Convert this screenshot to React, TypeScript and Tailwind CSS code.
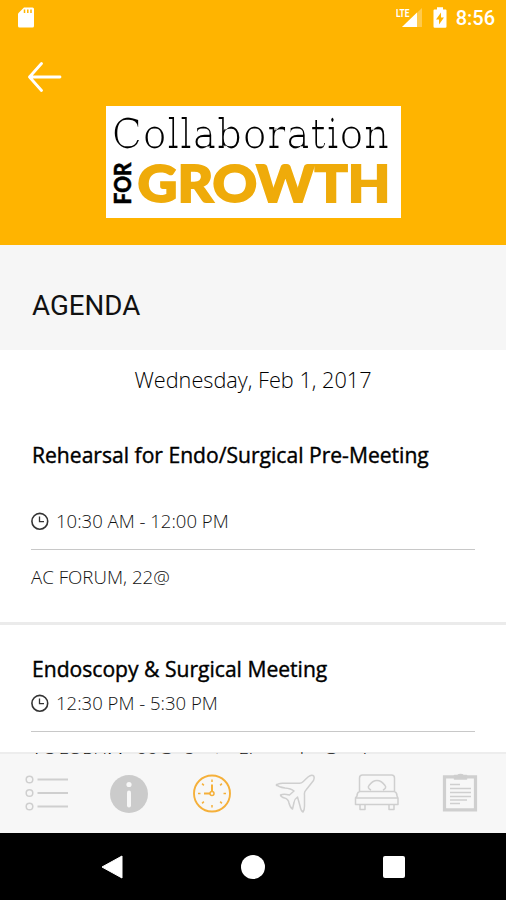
import type { ReactNode } from 'react';

interface Session {
  title: string;
  time: string;
  place: string;
}

const sessions: Session[] = [
  { title: 'Rehearsal for Endo/Surgical Pre-Meeting', time: '10:30 AM - 12:00 PM', place: 'AC FORUM, 22@' },
  { title: 'Endoscopy & Surgical Meeting', time: '12:30 PM - 5:30 PM', place: 'AC FORUM , 22@, Sants, Eixample, Gracia' },
];

function StatusBar() {
  return (
    <div className="flex h-9 items-center justify-between pl-[17px] pr-[11px]">
      <svg width="18" height="22" viewBox="0 0 18 22">
        <path d="M7 .5h8.500a1.500 1.500 0 0 1 1.500 1.500v17a1.500 1.500 0 0 1-1.500 1.500h-13a1.500 1.500 0 0 1-1.500-1.500V6.500z" fill="#fff" />
        <path d="M7.500 2.500v3.500M10.800 2.500v3.500M14 2.500v3.500" stroke="#ffb400" strokeWidth="1.500" />
      </svg>
      <div className="flex items-center">
        <svg width="28" height="22" viewBox="0 0 28 22">
          <text x="0" y="9.500" textLength="13.500" lengthAdjust="spacingAndGlyphs" className="font-['Roboto',sans-serif] text-[11.500px] font-bold" fill="#fff">LTE</text>
          <path d="M6 20L26 1v19z" fill="#fff" opacity=".3" />
          <path d="M6 20L21 5.500v14.500z" fill="#fff" />
        </svg>
        <svg className="ml-[9px]" width="14" height="22" viewBox="0 0 14 22">
          <path d="M4 .3h6V2.500h2.500a1 1 0 0 1 1 1v16a1.200 1.200 0 0 1-1.200 1.200H1.700A1.200 1.200 0 0 1 .5 19.500V3.500a1 1 0 0 1 1-1H4z" fill="#fff" />
          <path d="M8 5.500l-5 7h3v5l5-7H8z" fill="#ffb400" />
        </svg>
        <span className="ml-[9px] font-['Roboto',sans-serif] text-[20px] font-medium leading-[22px] text-white">8:56</span>
      </div>
    </div>
  );
}

function Logo() {
  return (
    <div className="h-[112px] w-[295px] bg-white">
      <svg width="295" height="112" viewBox="0 0 295 112">
        {/* thins the upright stems so that the slab letters look even */}
        <filter id="thin-stems" x="-5%" y="-5%" width="110%" height="110%" colorInterpolationFilters="sRGB">
          <feMorphology operator="erode" radius="1 0" />
        </filter>
        <text x="5.500" y="41.500" textLength="278" lengthAdjust="spacingAndGlyphs" className="font-['DejaVu_Serif',serif] text-[41px]" fill="#000" filter="url(#thin-stems)">
          Collaboration
        </text>
        <text transform="translate(25 98.500) rotate(-90)" textLength="42" lengthAdjust="spacingAndGlyphs" className="font-['Lato',sans-serif] text-[22px] font-black" fill="#000" stroke="#000" strokeWidth=".5">
          FOR
        </text>
        <text x="31.500" y="95.700" textLength="253" lengthAdjust="spacingAndGlyphs" className="font-['Lato',sans-serif] text-[51.500px] font-black" fill="#efab0a" stroke="#efab0a" strokeWidth="1.800">
          GROWTH
        </text>
      </svg>
    </div>
  );
}

function ClockIcon() {
  return (
    <svg width="18" height="18" viewBox="0 0 18 18" fill="none" stroke="#333" strokeWidth="1.600">
      <circle cx="8.800" cy="9.300" r="7.900" />
      <path d="M8.500 4.500v5.200H13" strokeWidth="1.300" />
    </svg>
  );
}

function SessionCard({ session, timeGap, placeGap }: { session: Session; timeGap: string; placeGap: string }) {
  return (
    <div className="px-8">
      <h2 className="h-8 whitespace-nowrap text-[21.1px] font-normal leading-8 text-black [-webkit-text-stroke:0.4px_black]">{session.title}</h2>
      <div className={`flex h-9 items-center ${timeGap}`}>
        <div className="-ml-px">
          <ClockIcon />
        </div>
        <span className="ml-[7px] whitespace-nowrap text-[18.55px] font-light text-[#111]">{session.time}</span>
      </div>
      <div className="-ml-px mr-[-1px] mt-[10px] h-px bg-[#c8c8c8]" />
      <p className={`-ml-px h-9 whitespace-nowrap text-[18.7px] font-light leading-9 text-[#111] ${placeGap}`}>{session.place}</p>
    </div>
  );
}

function TabIcon({ width, children }: { width: number; children: ReactNode }) {
  return (
    <svg width={width} height="42" viewBox={`0 0 ${width} 42`} fill="none" stroke="#cfcfcf" strokeWidth="1.500" strokeLinejoin="round">
      {children}
    </svg>
  );
}

// the top border lies over the list, so the last row shows through it
function TabBar() {
  return (
    <nav className="-mt-[2px] flex h-[81px] shrink-0 items-center border-t-2 border-black/7 bg-[#f7f7f7] bg-clip-padding pl-[25px] pr-[28px]">
      <div className="flex w-full items-center">
        <TabIcon width={45}>
          {[6.5, 20, 33.5].map((y) => (
            <g key={y}>
              <circle cx="4.500" cy={y} r="3.300" />
              <path d={`M12.500 ${y}h30.500`} strokeWidth="2" />
            </g>
          ))}
        </TabIcon>
        <div className="ml-[39px]">
          <TabIcon width={40}>
            <circle cx="20" cy="21" r="19" fill="#cbcbcb" stroke="none" />
            <circle cx="20" cy="11.500" r="2.600" fill="#f7f7f7" stroke="none" />
            <path d="M20 19.500v13" stroke="#f7f7f7" strokeWidth="4" strokeLinecap="round" />
          </TabIcon>
        </div>
        <div className="ml-[43px]">
          <TabIcon width={40}>
            <g stroke="#f5b03a">
              <circle cx="20" cy="20.500" r="18" strokeWidth="1.900" />
              <path d="M20 11.500v7M18 20.500h-6" strokeWidth="2" />
              <circle cx="20" cy="20.500" r="2" />
              {[0, 45, 90, 135, 180, 225, 270, 315].map((a) => (
                <path key={a} d="M20 6.500v2.500" transform={`rotate(${a} 20 20.500)`} />
              ))}
            </g>
          </TabIcon>
        </div>
        <div className="ml-[43px]">
          <TabIcon width={40}>
            <path d="M1.500 12.500q1-2.300 6-2.300h17q2 0 3.500-1.500L33 4q3-2.500 5-1.500t.5 5L31 17q-2 2-1.500 5v11q0 4-1.500 6-2-1-3-6l-2.500-9q-3 2-3.500 5.500l-1.500 6.500q-2.500-1.500-3.500-6-.7-4-4.500-5-3.500-1-4-3 3-1.500 9 0l4.500-4q-3-2.500-9-3-7-1-8.500-3.500z" />
          </TabIcon>
        </div>
        <div className="ml-[39px]">
          <TabIcon width={46}>
            <path d="M5.500 18.500V5q0-3 3-3h29q3 0 3 3v13.500M5.500 18.500h35q2.500 1 2.500 4.500l1 2v6.500H1.500V25l1.500-2q0-3.500 2.500-4.500zM2 25h42M6 31.500v5h5v-5M35 31.500v5h5v-5M17 17q-4-2-2-4.500 3.500-5 8-5t8 5q2 2.500-2 4.500" />
          </TabIcon>
        </div>
        <div className="ml-[42px]">
          <TabIcon width={36}>
            <path d="M2.500 3.800h31v33H2.500z" strokeWidth="3.200" strokeLinejoin="miter" />
            <path d="M12.500 2.500h3q1-1 3-1t3 1h3V6h-12z" fill="#cecece" />
            <path d="M8 11.500h10M8 15.500h21M8 19.500h21M8 23.500h21M8 27h17M8 30.500h10" strokeWidth="1.400" />
          </TabIcon>
        </div>
      </div>
    </nav>
  );
}

function SystemNav() {
  return (
    <div className="flex h-[67px] shrink-0 items-center justify-between bg-black pl-[100px] pr-[101px]">
      <svg width="23" height="24" viewBox="0 0 23 24">
        <path d="M2 12L22 1v22z" fill="#fff" stroke="#fff" strokeLinejoin="round" />
      </svg>
      <div className="h-6 w-6 rounded-full bg-white" />
      <div className="h-[22px] w-[22px] rounded-[2px] bg-white" />
    </div>
  );
}

export default function App() {
  return (
    <div className="flex h-[900px] w-[506px] flex-col overflow-hidden bg-white font-['Open_Sans',sans-serif]">
      <header className="h-[245px] shrink-0 bg-[#ffb400]">
        <StatusBar />
        <div className="pl-[27px] pt-[26px]">
          <svg width="36" height="31" viewBox="0 0 36 31" fill="none" stroke="#fff" strokeWidth="2.800" strokeLinecap="round" strokeLinejoin="round">
            <path d="M14.500 1.500L2.500 15l12 13.500M2.500 15h30.500" />
          </svg>
        </div>
        <div className="ml-[106px] mt-[13px]">
          <Logo />
        </div>
      </header>
      <div className="flex h-[105px] shrink-0 items-center bg-[#f6f6f6] px-8 pt-[17px]">
        <h1 className="font-['Roboto',sans-serif] text-[27.7px] leading-8 text-[#111]">AGENDA</h1>
      </div>
      <main className="min-h-0 flex-1 overflow-hidden">
        <p className="mt-3 h-9 text-center text-[21.7px] font-light leading-9 text-black">Wednesday, Feb 1, 2017</p>
        <div className="mt-[41px]">
          <SessionCard session={sessions[0]} timeGap="mt-[32px]" placeGap="mt-[9px]" />
        </div>
        <div className="mt-[27px] h-[3px] bg-[#ebebeb]" />
        <div className="mt-[28px]">
          <SessionCard session={sessions[1]} timeGap="mt-0" placeGap="mt-[9px]" />
        </div>
      </main>
      <TabBar />
      <SystemNav />
    </div>
  );
}
